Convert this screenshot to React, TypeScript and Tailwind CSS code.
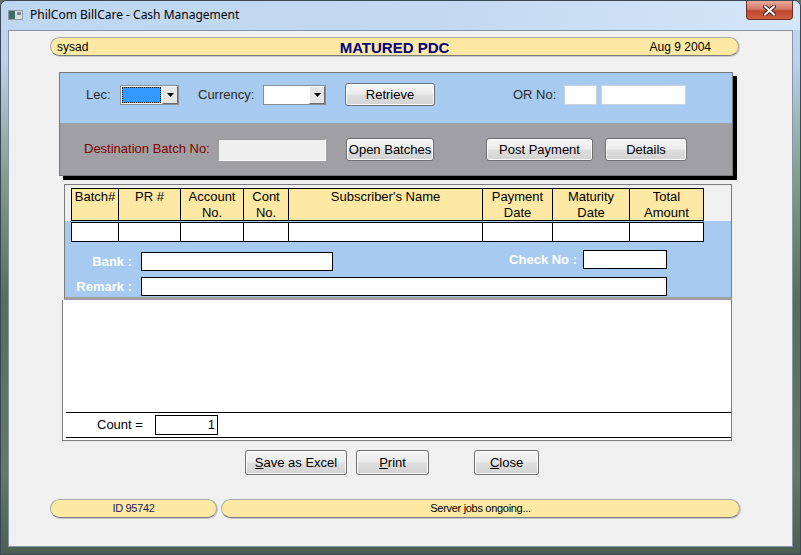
import React from 'react';

// Win7 style push button used across the form
const btn =
  "flex items-center justify-center rounded-[3px] border border-[#707070] bg-[linear-gradient(to_bottom,#f4f4f4_0%,#ececec_45%,#dddddd_55%,#d3d3d3_100%)] shadow-[inset_0_0_0_1px_#fbfbfb] text-[13px] text-black";

const pill =
  "flex h-[19px] items-center rounded-full border border-[#a8a8a8] border-b-[#7c7c7c] bg-[#fde9a4] shadow-[1px_1px_0_#c9c9c9]";

type Col = { w: string; top: string; bottom?: string };

const columns: Col[] = [
  { w: 'w-[47px]', top: 'Batch#' },
  { w: 'w-[62px]', top: 'PR #' },
  { w: 'w-[63px]', top: 'Account', bottom: 'No.' },
  { w: 'w-[45px]', top: 'Cont', bottom: 'No.' },
  { w: 'w-[194px]', top: "Subscriber's Name" },
  { w: 'w-[70px]', top: 'Payment', bottom: 'Date' },
  { w: 'w-[77px]', top: 'Maturity', bottom: 'Date' },
  { w: 'w-[74px]', top: 'Total', bottom: 'Amount' },
];

function Combo({ focused }: { focused?: boolean }) {
  return (
    <div className="flex h-[20px] w-full border border-[#8a8f96] bg-white">
      <div className="flex-1 p-[1px]">
        {focused && <div className="h-full w-full border border-dotted border-black bg-[#3399ff]" />}
      </div>
      <div className="flex w-[16px] items-center justify-center border border-t-white border-l-white border-b-[#6a6a6a] border-r-[#6a6a6a] bg-[#e6e6e6]">
        <svg width="7" height="4" viewBox="0 0 7 4">
          <path d="M0 0h7L3.5 4z" fill="#000" />
        </svg>
      </div>
    </div>
  );
}

export default function App() {
  return (
    <div className="h-[555px] w-[801px] overflow-hidden bg-[#5f7466]">
      <div className="flex h-full w-full flex-col rounded-t-[7px] border border-[#3b4754] bg-[linear-gradient(to_bottom,#c1d7ef_0px,#bad2ec_60px,#86a08f_170px,#566e5a_300px,#647a66_470px,#4d5d52_555px)] font-['Liberation_Sans',Arial,sans-serif]">
        {/* title bar */}
        <div className="flex h-[29px] shrink-0 items-start rounded-t-[6px] bg-[linear-gradient(to_right,#bed6f0_0%,#c3d9f1_55%,#d5e6f8_100%)]">
          <svg className="ml-[7px] mt-[9px]" width="15" height="10" viewBox="0 0 15 10">
            <rect x="0.5" y="0.5" width="14" height="9" fill="#d9dde0" stroke="#8c9aa3" />
            <rect x="1" y="1" width="6" height="8" fill="#3e6d63" />
            <rect x="9" y="2" width="4" height="3" fill="#7b8a90" />
          </svg>
          <span className="ml-[7px] mt-[6px] font-['Noto_Sans',sans-serif] text-[12px] leading-[16px] text-black">
            PhilCom BillCare - Cash Management
          </span>
          <div className="ml-auto mr-[7px] flex h-[19px] w-[47px] items-center justify-center rounded-b-[4px] border border-t-0 border-[#6e2e25] bg-[linear-gradient(to_bottom,#e8a99b_0%,#d27865_45%,#c1452f_55%,#d0603f_100%)]">
            <svg width="13" height="11" viewBox="0 0 13 11">
              <path d="M2 1.5L11 9.5M11 1.5L2 9.5" stroke="#4a2520" strokeWidth="4" strokeLinecap="square" />
              <path d="M2 1.5L11 9.5M11 1.5L2 9.5" stroke="#ffffff" strokeWidth="2" strokeLinecap="square" />
            </svg>
          </div>
        </div>

        {/* client area */}
        <div className="ml-[7px] flex h-[517px] w-[785px] flex-col border border-[#8696a8] bg-[#f0f0f0]">
          {/* header pill */}
          <div className={`${pill} ml-[41px] mt-[6px] grid w-[689px] grid-cols-[1fr_auto_1fr]`}>
            <span className="pl-[6px] text-[12px] text-black">sysad</span>
            <span className="text-[15px] font-bold leading-[17px] text-[#000080]">MATURED PDC</span>
            <span className="pr-[27px] text-right text-[12px] text-black">Aug 9 2004</span>
          </div>

          {/* criteria panel */}
          <div className="ml-[50px] mt-[16px] flex h-[104px] w-[674px] flex-col border border-[#787878] shadow-[4px_4px_0_#000]">
            <div className="flex h-[50px] items-start bg-[#a6caf0] pl-[26px] pt-[12px] text-[13px] leading-[20px] text-[#2a2a2a]">
              <span className="w-[34px]">Lec:</span>
              <div className="w-[59px]">
                <Combo focused />
              </div>
              <span className="ml-[19px] w-[65px]">Currency:</span>
              <div className="w-[63px]">
                <Combo />
              </div>
              <div className={`${btn} ml-[19px] mt-[-2px] h-[23px] w-[90px]`}>Retrieve</div>
              <span className="ml-[78px] w-[51px]">OR No:</span>
              <div className="h-[20px] w-[33px] border border-[#cbd3dc] bg-white" />
              <div className="ml-[4px] h-[20px] w-[85px] border border-[#cbd3dc] bg-white" />
            </div>
            <div className="flex flex-1 items-start bg-[#a0a0a4] pl-[24px] pt-[15px] text-[13px] leading-[22px]">
              <span className="w-[134px] text-[#800000]">Destination Batch No:</span>
              <div className="mt-[1px] h-[22px] w-[108px] border border-t-[#9a9a9a] border-l-[#9a9a9a] border-b-white border-r-white bg-[#efefef]" />
              <div className={`${btn} ml-[20px] h-[23px] w-[88px]`}>Open Batches</div>
              <div className={`${btn} ml-[52px] h-[23px] w-[107px]`}>Post Payment</div>
              <div className={`${btn} ml-[12px] h-[23px] w-[82px]`}>Details</div>
            </div>
          </div>

          {/* detail data window */}
          <div className="ml-[55px] mt-[8px] flex h-[116px] w-[668px] flex-col border border-[#7c7c7c] border-b-[3px] border-b-[#a0a0a4] bg-[#f0f0f0] text-[13px]">
            <div className="h-[36px] shrink-0 pl-[6px] pt-[3px]">
              <div className="flex h-[33px] w-[633px] border border-r-0 border-black bg-[#fde9a4]">
                {columns.map((c) => (
                  <div key={c.top} className={`${c.w} border-r border-black text-center leading-[16px] text-black`}>
                    <div>{c.top}</div>
                    {c.bottom && <div>{c.bottom}</div>}
                  </div>
                ))}
              </div>
            </div>
            <div className="flex-1 bg-[#a6caf0] pt-[1px]">
              <div className="ml-[6px] flex h-[20px] w-[633px] border border-r-0 border-black bg-white">
                {columns.map((c) => (
                  <div key={c.top} className={`${c.w} border-r border-black`} />
                ))}
              </div>
              <div className="mt-[8px] flex h-[21px] items-start font-bold text-white">
                <span className="mt-[2px] h-[19px] w-[67px] text-right leading-[19px]">Bank :</span>
                <div className="ml-[9px] mt-[2px] h-[19px] w-[192px] border border-black bg-white" />
                <span className="h-[19px] w-[244px] text-right leading-[19px]">Check No :</span>
                <div className="ml-[6px] h-[19px] w-[84px] border border-black bg-white" />
              </div>
              <div className="mt-[6px] flex h-[19px] items-start font-bold text-white">
                <span className="h-[19px] w-[67px] text-right leading-[19px]">Remark :</span>
                <div className="ml-[9px] h-[19px] w-[526px] border border-black bg-white" />
              </div>
            </div>
          </div>

          <div className="ml-[53px] flex h-[141px] w-[670px] flex-col border-x border-b border-[#7c7c7c] bg-white text-[13px]">
            <div className="h-[112px] shrink-0" />
            <div className="ml-[3px] flex h-[26px] items-start border-y border-black pl-[31px]">
              <span className="w-[58px] leading-[24px]">Count =</span>
              <div className="mt-[2px] h-[20px] w-[63px] border border-black pr-[2px] text-right leading-[18px]">1</div>
            </div>
          </div>

          {/* action buttons */}
          <div className="mt-[9px] flex h-[25px]">
            <div className={`${btn} ml-[236px] w-[102px]`}>
              <span>
                <u>S</u>ave as Excel
              </span>
            </div>
            <div className={`${btn} ml-[9px] w-[73px]`}>
              <span>
                <u>P</u>rint
              </span>
            </div>
            <div className={`${btn} ml-[45px] w-[65px]`}>
              <span>
                <u>C</u>lose
              </span>
            </div>
          </div>

          {/* status pills */}
          <div className="mt-[24px] flex">
            <div className={`${pill} ml-[41px] w-[167px] justify-center text-[11px] tracking-[-0.3px] text-[#1a1a66]`}>ID 95742</div>
            <div className={`${pill} ml-[4px] w-[519px] justify-center text-[11px] tracking-[-0.3px] text-black`}>Server jobs ongoing...</div>
          </div>
        </div>
      </div>
    </div>
  );
}
